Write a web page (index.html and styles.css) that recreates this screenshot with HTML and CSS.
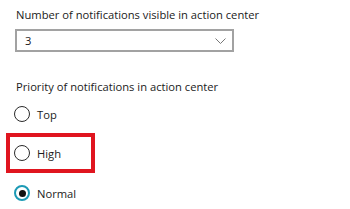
FILE: index.html
```html
<!DOCTYPE html>
<html lang="en">
<head>
    <meta charset="UTF-8">
    <title>Action center settings</title>
    <link rel="stylesheet" href="styles.css">
</head>
<body>
    <div class="settings">
        <p class="label">Number of notifications visible in action center</p>
        <div class="dropdown">
            <span>3</span>
            <svg class="chevron" width="11" height="6" viewBox="0 0 11 6">
                <path d="M0.5 0.5 L5.5 5.5 L10.5 0.5" fill="none" stroke="#777" stroke-width="1"/>
            </svg>
        </div>

        <p class="label priority">Priority of notifications in action center</p>
        <div class="radios">
            <div class="radio"><span class="circle"></span>Top</div>
            <div class="highlight">
                <div class="radio"><span class="circle"></span>High</div>
            </div>
            <div class="radio"><span class="circle checked"></span>Normal</div>
        </div>
    </div>
</body>
</html>
```

FILE: styles.css
```css
* {
    margin: 0;
    padding: 0;
    box-sizing: border-box;
}
body {
    background-color: #fff;
    font-family: "Open Sans", "Noto Sans", sans-serif;
    font-size: 11.2px;
    color: #1b1b1b;
}
.settings {
    padding: 6px 0 0 16px;
}
.label {
    line-height: 17px;
}
.dropdown {
    display: flex;
    align-items: center;
    justify-content: space-between;
    width: 219px;
    height: 23px;
    margin: 6px 0 0 -1px;
    padding: 0 6px 0 8px;
    border: 2px solid #a2a2a2;
}
.chevron {
    display: block;
}
.priority {
    margin-top: 26px;
}
.radios {
    display: flex;
    flex-direction: column;
    margin-top: 9px;
}
.radio {
    display: flex;
    align-items: center;
    gap: 7px;
    height: 20px;
    margin-left: -2px;
}
.circle {
    width: 16px;
    height: 16px;
    border: 1.5px solid #2b2b2b;
    border-radius: 50%;
    display: flex;
    align-items: center;
    justify-content: center;
}
.circle.checked {
    border: 2px solid #1c9ab5;
}
.circle.checked::after {
    content: "";
    width: 7px;
    height: 7px;
    border-radius: 50%;
    background-color: #111;
}
.highlight {
    width: 89px;
    margin: 9px 0 10px -10px;
    padding: 6px 0 6px 6px;
    border: 4px solid #e0151f;
}
```
